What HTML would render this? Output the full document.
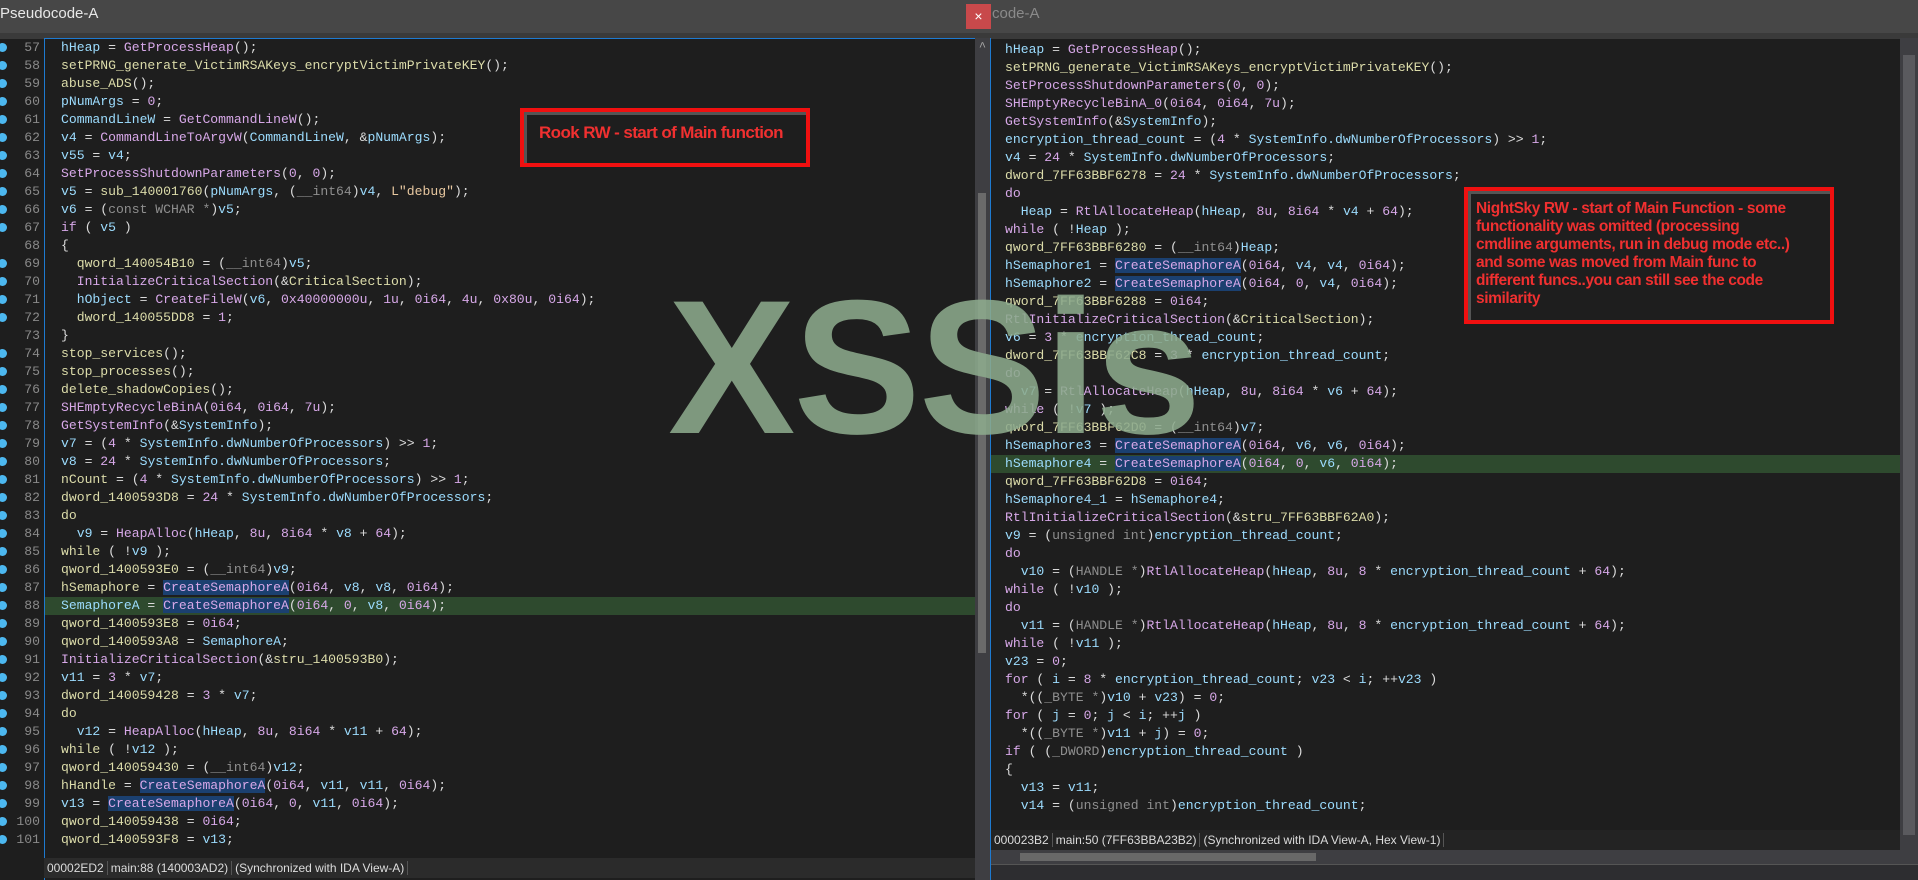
<!DOCTYPE html>
<html><head><meta charset="utf-8"><style>
*{margin:0;padding:0;box-sizing:border-box}
body{width:1918px;height:880px;overflow:hidden;background:#1e1e1e;position:relative;font-family:"Liberation Mono",monospace;font-size:13px;color:#dcdcdc}
.abs{position:absolute}
pre{font-family:"Liberation Mono",monospace;font-size:13.1px;line-height:18px;white-space:pre;margin:0}
.v{color:#9cdcfe}.f{color:#d7a8e8}.n{color:#d7a8e8}.g{color:#dcdcaa}.c{color:#8f8f8f}.k{color:#d7a8e8}.s{color:#e8c8a0}
.sel{background:#1b4070}
.status{font-family:"Liberation Sans",sans-serif;font-size:12px;color:#dcdcdc;background:#2b2b2b;height:20px;line-height:20px;white-space:nowrap}
.status span{border-right:1px solid #555;padding:0 3px}
.dot{position:absolute;left:-2px;width:9px;height:9px;border-radius:50%;background:#4cb8f0}
</style></head><body>
<div class="abs" style="left:0;top:0;width:1918px;height:33px;background:#474747"></div>
<div class="abs" style="left:0;top:33px;width:1918px;height:6px;background:#3a3a3a"></div>
<div class="abs" style="left:0;top:5px;font-family:'Liberation Sans',sans-serif;font-size:15px;color:#e8e8e8">Pseudocode-A</div>
<div class="abs" style="left:966px;top:4px;width:25px;height:25px;background:#c8494b;color:#fff;font-family:'Liberation Sans',sans-serif;font-size:14px;text-align:center;line-height:25px">×</div>
<div class="abs" style="left:992px;top:5px;font-family:'Liberation Sans',sans-serif;font-size:15px;color:#8a8a8a">code-A</div>

<div class="abs" style="left:44px;top:38px;width:931px;height:1px;background:#1e7ad0"></div>
<div class="abs" style="left:44px;top:38px;width:1px;height:842px;background:#1e7ad0"></div>
<div class="abs" style="left:45px;top:597px;width:930px;height:18px;background:#2e4a2e"></div>
<div class="abs" style="left:975px;top:38px;width:15px;height:842px;background:#3e3e42"></div>
<div class="abs" style="left:978px;top:193px;width:8px;height:460px;background:#6a6a6a"></div>
<div class="abs" style="left:990px;top:38px;width:1px;height:842px;background:#1e7ad0"></div>

<div class="abs" style="left:0;top:39px;width:40px">
<pre style="color:#8a8a8a;text-align:right">57
58
59
60
61
62
63
64
65
66
67
68
69
70
71
72
73
74
75
76
77
78
79
80
81
82
83
84
85
86
87
88
89
90
91
92
93
94
95
96
97
98
99
100
101</pre></div>
<div class="abs" style="left:0;top:39px">
<div class="dot" style="top:4px"></div><div class="dot" style="top:22px"></div><div class="dot" style="top:40px"></div><div class="dot" style="top:58px"></div><div class="dot" style="top:76px"></div><div class="dot" style="top:94px"></div><div class="dot" style="top:112px"></div><div class="dot" style="top:130px"></div><div class="dot" style="top:148px"></div><div class="dot" style="top:166px"></div><div class="dot" style="top:184px"></div><div class="dot" style="top:220px"></div><div class="dot" style="top:238px"></div><div class="dot" style="top:256px"></div><div class="dot" style="top:274px"></div><div class="dot" style="top:310px"></div><div class="dot" style="top:328px"></div><div class="dot" style="top:346px"></div><div class="dot" style="top:364px"></div><div class="dot" style="top:382px"></div><div class="dot" style="top:400px"></div><div class="dot" style="top:418px"></div><div class="dot" style="top:436px"></div><div class="dot" style="top:454px"></div><div class="dot" style="top:472px"></div><div class="dot" style="top:490px"></div><div class="dot" style="top:508px"></div><div class="dot" style="top:526px"></div><div class="dot" style="top:544px"></div><div class="dot" style="top:562px"></div><div class="dot" style="top:580px"></div><div class="dot" style="top:598px"></div><div class="dot" style="top:616px"></div><div class="dot" style="top:634px"></div><div class="dot" style="top:652px"></div><div class="dot" style="top:670px"></div><div class="dot" style="top:688px"></div><div class="dot" style="top:706px"></div><div class="dot" style="top:724px"></div><div class="dot" style="top:742px"></div><div class="dot" style="top:760px"></div><div class="dot" style="top:778px"></div><div class="dot" style="top:796px"></div>
</div>

<div class="abs" style="left:61px;top:39px"><pre><span class="v">hHeap</span> = <span class="f">GetProcessHeap</span>();
<span class="g">setPRNG_generate_VictimRSAKeys_encryptVictimPrivateKEY</span>();
<span class="g">abuse_ADS</span>();
<span class="v">pNumArgs</span> = <span class="n">0</span>;
<span class="v">CommandLineW</span> = <span class="f">GetCommandLineW</span>();
<span class="v">v4</span> = <span class="f">CommandLineToArgvW</span>(<span class="v">CommandLineW</span>, &amp;<span class="v">pNumArgs</span>);
<span class="v">v55</span> = <span class="v">v4</span>;
<span class="f">SetProcessShutdownParameters</span>(<span class="n">0</span>, <span class="n">0</span>);
<span class="v">v5</span> = <span class="g">sub_140001760</span>(<span class="v">pNumArgs</span>, (<span class="c">__int64</span>)<span class="v">v4</span>, <span class="s">L"debug"</span>);
<span class="v">v6</span> = (<span class="c">const WCHAR *</span>)<span class="v">v5</span>;
<span class="k">if</span> ( <span class="v">v5</span> )
{
  <span class="g">qword_140054B10</span> = (<span class="c">__int64</span>)<span class="v">v5</span>;
  <span class="f">InitializeCriticalSection</span>(&amp;<span class="g">CriticalSection</span>);
  <span class="v">hObject</span> = <span class="f">CreateFileW</span>(<span class="v">v6</span>, <span class="n">0x40000000u</span>, <span class="n">1u</span>, <span class="n">0i64</span>, <span class="n">4u</span>, <span class="n">0x80u</span>, <span class="n">0i64</span>);
  <span class="g">dword_140055DD8</span> = <span class="n">1</span>;
}
<span class="g">stop_services</span>();
<span class="g">stop_processes</span>();
<span class="g">delete_shadowCopies</span>();
<span class="f">SHEmptyRecycleBinA</span>(<span class="n">0i64</span>, <span class="n">0i64</span>, <span class="n">7u</span>);
<span class="f">GetSystemInfo</span>(&amp;<span class="v">SystemInfo</span>);
<span class="v">v7</span> = (<span class="n">4</span> * <span class="v">SystemInfo.dwNumberOfProcessors</span>) &gt;&gt; <span class="n">1</span>;
<span class="v">v8</span> = <span class="n">24</span> * <span class="v">SystemInfo.dwNumberOfProcessors</span>;
<span class="g">nCount</span> = (<span class="n">4</span> * <span class="v">SystemInfo.dwNumberOfProcessors</span>) &gt;&gt; <span class="n">1</span>;
<span class="g">dword_1400593D8</span> = <span class="n">24</span> * <span class="v">SystemInfo.dwNumberOfProcessors</span>;
<span class="g">do</span>
  <span class="v">v9</span> = <span class="f">HeapAlloc</span>(<span class="v">hHeap</span>, <span class="n">8u</span>, <span class="n">8i64</span> * <span class="v">v8</span> + <span class="n">64</span>);
<span class="g">while</span> ( !<span class="v">v9</span> );
<span class="g">qword_1400593E0</span> = (<span class="c">__int64</span>)<span class="v">v9</span>;
<span class="g">hSemaphore</span> = <span class="f sel">CreateSemaphoreA</span>(<span class="n">0i64</span>, <span class="v">v8</span>, <span class="v">v8</span>, <span class="n">0i64</span>);
<span class="v">SemaphoreA</span> = <span class="f sel">CreateSemaphoreA</span>(<span class="n">0i64</span>, <span class="n">0</span>, <span class="v">v8</span>, <span class="n">0i64</span>);
<span class="g">qword_1400593E8</span> = <span class="n">0i64</span>;
<span class="g">qword_1400593A8</span> = <span class="v">SemaphoreA</span>;
<span class="f">InitializeCriticalSection</span>(&amp;<span class="g">stru_1400593B0</span>);
<span class="v">v11</span> = <span class="n">3</span> * <span class="v">v7</span>;
<span class="g">dword_140059428</span> = <span class="n">3</span> * <span class="v">v7</span>;
<span class="g">do</span>
  <span class="v">v12</span> = <span class="f">HeapAlloc</span>(<span class="v">hHeap</span>, <span class="n">8u</span>, <span class="n">8i64</span> * <span class="v">v11</span> + <span class="n">64</span>);
<span class="g">while</span> ( !<span class="v">v12</span> );
<span class="g">qword_140059430</span> = (<span class="c">__int64</span>)<span class="v">v12</span>;
<span class="g">hHandle</span> = <span class="f sel">CreateSemaphoreA</span>(<span class="n">0i64</span>, <span class="v">v11</span>, <span class="v">v11</span>, <span class="n">0i64</span>);
<span class="v">v13</span> = <span class="f sel">CreateSemaphoreA</span>(<span class="n">0i64</span>, <span class="n">0</span>, <span class="v">v11</span>, <span class="n">0i64</span>);
<span class="g">qword_140059438</span> = <span class="n">0i64</span>;
<span class="g">qword_1400593F8</span> = <span class="v">v13</span>;</pre></div>

<div class="abs status" style="left:44px;top:858px;width:931px"><span>00002ED2</span><span>main:88 (140003AD2)</span><span>(Synchronized with IDA View-A)</span></div>

<div class="abs" style="left:975px;top:40px;width:15px;height:20px;color:#aaa;font-size:12px;text-align:center">^</div>
<div class="abs" style="left:991px;top:455px;width:909px;height:18px;background:#2e4a2e"></div>
<div class="abs" style="left:1900px;top:38px;width:18px;height:842px;background:#3e3e42"></div>
<div class="abs" style="left:1903px;top:55px;width:12px;height:780px;background:#5a5a5e"></div>

<div class="abs" style="left:1005px;top:41px"><pre><span class="v">hHeap</span> = <span class="f">GetProcessHeap</span>();
<span class="g">setPRNG_generate_VictimRSAKeys_encryptVictimPrivateKEY</span>();
<span class="f">SetProcessShutdownParameters</span>(<span class="n">0</span>, <span class="n">0</span>);
<span class="f">SHEmptyRecycleBinA_0</span>(<span class="n">0i64</span>, <span class="n">0i64</span>, <span class="n">7u</span>);
<span class="f">GetSystemInfo</span>(&amp;<span class="v">SystemInfo</span>);
<span class="v">encryption_thread_count</span> = (<span class="n">4</span> * <span class="v">SystemInfo.dwNumberOfProcessors</span>) &gt;&gt; <span class="n">1</span>;
<span class="v">v4</span> = <span class="n">24</span> * <span class="v">SystemInfo.dwNumberOfProcessors</span>;
<span class="g">dword_7FF63BBF6278</span> = <span class="n">24</span> * <span class="v">SystemInfo.dwNumberOfProcessors</span>;
<span class="k">do</span>
  <span class="v">Heap</span> = <span class="f">RtlAllocateHeap</span>(<span class="v">hHeap</span>, <span class="n">8u</span>, <span class="n">8i64</span> * <span class="v">v4</span> + <span class="n">64</span>);
<span class="k">while</span> ( !<span class="v">Heap</span> );
<span class="g">qword_7FF63BBF6280</span> = (<span class="c">__int64</span>)<span class="v">Heap</span>;
<span class="v">hSemaphore1</span> = <span class="f sel">CreateSemaphoreA</span>(<span class="n">0i64</span>, <span class="v">v4</span>, <span class="v">v4</span>, <span class="n">0i64</span>);
<span class="v">hSemaphore2</span> = <span class="f sel">CreateSemaphoreA</span>(<span class="n">0i64</span>, <span class="n">0</span>, <span class="v">v4</span>, <span class="n">0i64</span>);
<span class="g">qword_7FF63BBF6288</span> = <span class="n">0i64</span>;
<span class="f">RtlInitializeCriticalSection</span>(&amp;<span class="g">CriticalSection</span>);
<span class="v">v6</span> = <span class="n">3</span> * <span class="v">encryption_thread_count</span>;
<span class="g">dword_7FF63BBF62C8</span> = <span class="n">3</span> * <span class="v">encryption_thread_count</span>;
<span class="k">do</span>
  <span class="v">v7</span> = <span class="f">RtlAllocateHeap</span>(<span class="v">hHeap</span>, <span class="n">8u</span>, <span class="n">8i64</span> * <span class="v">v6</span> + <span class="n">64</span>);
<span class="k">while</span> ( !<span class="v">v7</span> );
<span class="g">qword_7FF63BBF62D0</span> = (<span class="c">__int64</span>)<span class="v">v7</span>;
<span class="v">hSemaphore3</span> = <span class="f sel">CreateSemaphoreA</span>(<span class="n">0i64</span>, <span class="v">v6</span>, <span class="v">v6</span>, <span class="n">0i64</span>);
<span class="v">hSemaphore4</span> = <span class="f sel">CreateSemaphoreA</span>(<span class="n">0i64</span>, <span class="n">0</span>, <span class="v">v6</span>, <span class="n">0i64</span>);
<span class="g">qword_7FF63BBF62D8</span> = <span class="n">0i64</span>;
<span class="v">hSemaphore4_1</span> = <span class="v">hSemaphore4</span>;
<span class="f">RtlInitializeCriticalSection</span>(&amp;<span class="g">stru_7FF63BBF62A0</span>);
<span class="v">v9</span> = (<span class="c">unsigned int</span>)<span class="v">encryption_thread_count</span>;
<span class="k">do</span>
  <span class="v">v10</span> = (<span class="c">HANDLE *</span>)<span class="f">RtlAllocateHeap</span>(<span class="v">hHeap</span>, <span class="n">8u</span>, <span class="n">8</span> * <span class="v">encryption_thread_count</span> + <span class="n">64</span>);
<span class="k">while</span> ( !<span class="v">v10</span> );
<span class="k">do</span>
  <span class="v">v11</span> = (<span class="c">HANDLE *</span>)<span class="f">RtlAllocateHeap</span>(<span class="v">hHeap</span>, <span class="n">8u</span>, <span class="n">8</span> * <span class="v">encryption_thread_count</span> + <span class="n">64</span>);
<span class="k">while</span> ( !<span class="v">v11</span> );
<span class="v">v23</span> = <span class="n">0</span>;
<span class="k">for</span> ( <span class="v">i</span> = <span class="n">8</span> * <span class="v">encryption_thread_count</span>; <span class="v">v23</span> &lt; <span class="v">i</span>; ++<span class="v">v23</span> )
  *((<span class="c">_BYTE *</span>)<span class="v">v10</span> + <span class="v">v23</span>) = <span class="n">0</span>;
<span class="k">for</span> ( <span class="v">j</span> = <span class="n">0</span>; <span class="v">j</span> &lt; <span class="v">i</span>; ++<span class="v">j</span> )
  *((<span class="c">_BYTE *</span>)<span class="v">v11</span> + <span class="v">j</span>) = <span class="n">0</span>;
<span class="k">if</span> ( (<span class="c">_DWORD</span>)<span class="v">encryption_thread_count</span> )
{
  <span class="v">v13</span> = <span class="v">v11</span>;
  <span class="v">v14</span> = (<span class="c">unsigned int</span>)<span class="v">encryption_thread_count</span>;</pre></div>

<div class="abs status" style="left:991px;top:830px;width:909px;background:#232323"><span>000023B2</span><span>main:50 (7FF63BBA23B2)</span><span>(Synchronized with IDA View-A, Hex View-1)</span></div>
<div class="abs" style="left:991px;top:850px;width:909px;height:14px;background:#3e3e42"></div>
<div class="abs" style="left:1020px;top:853px;width:296px;height:8px;background:#686868"></div>
<div class="abs" style="left:991px;top:864px;width:927px;height:16px;background:#2d2d30;border-top:1px solid #555"></div>

<div class="abs" style="left:520px;top:108px;width:290px;height:59px;border:4px solid #f01010;background:#1e1e1e;box-shadow:inset 3px 3px 0 #555"></div>
<div class="abs" style="left:539px;top:123px;font-family:'Liberation Sans',sans-serif;font-weight:bold;font-size:17px;letter-spacing:-0.6px;color:#f03030">Rook RW - start of Main function</div>
<div class="abs" style="left:1464px;top:187px;width:370px;height:137px;border:4px solid #f01010;background:#1e1e1e;box-shadow:inset 3px 3px 0 #555"></div>
<div class="abs" style="left:1476px;top:200px;width:360px;white-space:nowrap;font-family:'Liberation Sans',sans-serif;font-weight:bold;font-size:15.5px;line-height:18px;letter-spacing:-0.4px;color:#f03030">NightSky RW - start of Main Function - some<br>functionality was omitted (processing<br>cmdline arguments, run in debug mode etc..)<br>and some was moved from Main func to<br>different funcs..you can still see the code<br>similarity</div>

<div class="abs" style="left:668px;top:272px;font-family:'Liberation Sans',sans-serif;font-weight:bold;font-size:191px;line-height:191px;letter-spacing:-2px;color:rgba(140,170,140,0.88)">XSSis</div>
</body></html>
